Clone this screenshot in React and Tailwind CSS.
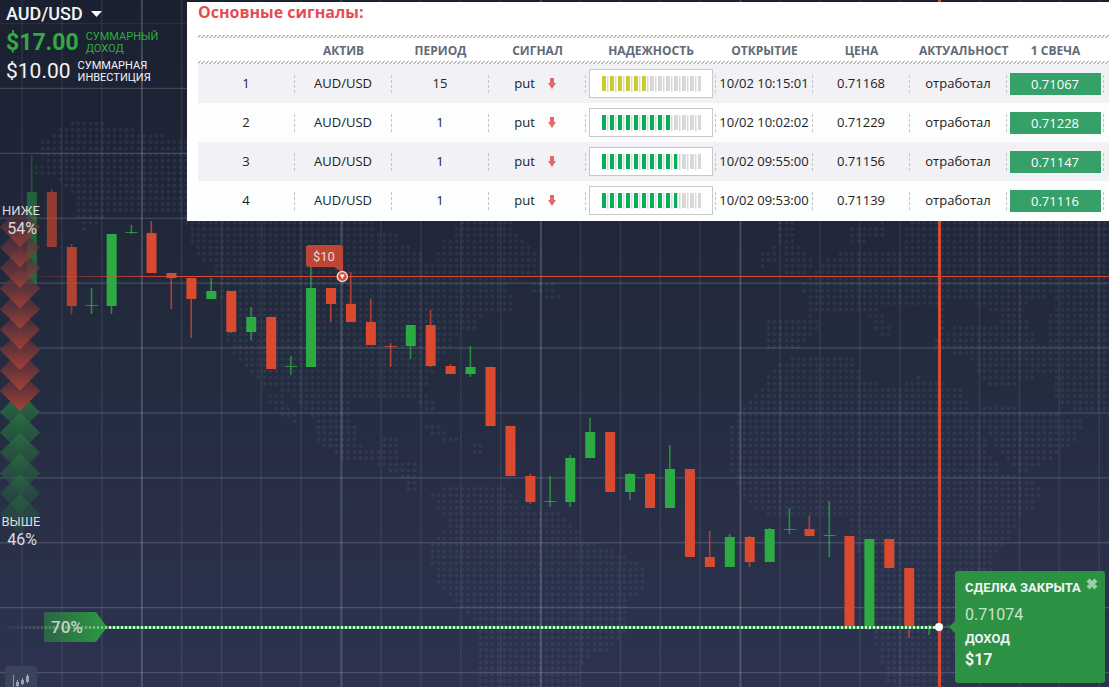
import { useMemo } from "react";

const signals = [
  { id: 1, asset: "AUD/USD", period: 15, signal: "put", power: 46, color: "#cdca2c", opened: "10/02 10:15:01", price: "0.71168", status: "отработал", candle: "0.71067" },
  { id: 2, asset: "AUD/USD", period: 1, signal: "put", power: 69, color: "#04b057", opened: "10/02 10:02:02", price: "0.71229", status: "отработал", candle: "0.71228" },
  { id: 3, asset: "AUD/USD", period: 1, signal: "put", power: 75, color: "#04b057", opened: "10/02 09:55:00", price: "0.71156", status: "отработал", candle: "0.71147" },
  { id: 4, asset: "AUD/USD", period: 1, signal: "put", power: 75, color: "#04b057", opened: "10/02 09:53:00", price: "0.71139", status: "отработал", candle: "0.71116" },
];

// [direction, body top, body bottom, wick top, wick bottom]
const candles = [
  ["up", 192, 284, 155, 284],
  ["down", 192, 247, 189, 247],
  ["down", 247, 306, 244, 314],
  ["up", 305, 306, 288, 314],
  ["up", 234, 306, 234, 314],
  ["up", 232, 233, 225, 234],
  ["down", 233, 273, 221, 273],
  ["down", 273, 278, 273, 309],
  ["down", 278, 299, 278, 338],
  ["up", 291, 299, 278, 299],
  ["down", 291, 332, 291, 333],
  ["up", 317, 332, 307, 340],
  ["down", 317, 369, 317, 369],
  ["up", 366, 367, 356, 375],
  ["up", 288, 367, 267, 367],
  ["down", 288, 304, 288, 322],
  ["down", 304, 322, 272, 322],
  ["down", 322, 345, 299, 345],
  ["down", 346, 347, 343, 367],
  ["up", 325, 346, 325, 359],
  ["down", 325, 366, 310, 367],
  ["down", 366, 374, 364, 374],
  ["up", 367, 374, 346, 377],
  ["down", 367, 426, 367, 426],
  ["down", 426, 476, 426, 476],
  ["down", 476, 502, 474, 504],
  ["up", 501, 502, 476, 507],
  ["up", 458, 502, 455, 507],
  ["up", 432, 458, 418, 458],
  ["down", 432, 492, 432, 492],
  ["up", 474, 492, 473, 500],
  ["down", 474, 508, 473, 508],
  ["up", 469, 508, 445, 508],
  ["down", 469, 557, 469, 557],
  ["down", 557, 567, 531, 567],
  ["up", 537, 567, 534, 567],
  ["down", 537, 562, 536, 567],
  ["up", 529, 562, 528, 562],
  ["up", 529, 530, 508, 534],
  ["down", 529, 536, 516, 536],
  ["up", 535, 536, 501, 557],
  ["down", 536, 627, 536, 627],
  ["up", 539, 627, 539, 630],
  ["down", 539, 568, 539, 568],
  ["down", 568, 627, 568, 638],
  ["up", 626, 627, 625, 635],
];

const land = [
  // North America
  [[76, 120], [88, 120], [118, 127], [155, 134], [187, 140], [372, 150], [374, 235], [398, 235], [400, 244], [420, 250], [426, 262], [434, 262], [440, 245], [455, 232], [458, 222], [514, 222], [520, 240], [530, 245], [540, 255], [540, 275], [506, 280], [510, 300], [498, 312], [476, 318], [476, 330], [458, 334], [450, 350], [436, 362], [432, 376], [424, 390], [434, 398], [434, 415], [424, 412], [418, 396], [360, 398], [352, 404], [354, 420], [356, 444], [374, 448], [384, 450], [384, 438], [398, 436], [398, 458], [416, 462], [418, 492], [408, 492], [400, 475], [380, 468], [376, 460], [345, 460], [332, 452], [316, 440], [312, 412], [296, 402], [280, 388], [262, 384], [240, 362], [225, 342], [222, 294], [214, 264], [200, 258], [190, 240], [184, 216], [110, 210], [98, 226], [80, 232], [76, 200], [60, 185], [56, 176], [34, 174], [34, 166], [48, 162], [34, 144], [50, 136]],
  [[262, 392], [282, 392], [300, 424], [292, 424], [270, 404]],
  [[528, 282], [552, 282], [562, 300], [552, 300], [530, 292]],
  [[496, 284], [502, 310], [512, 310], [512, 296]],
  [[418, 424], [436, 424], [462, 442], [448, 442], [430, 432]],
  [[470, 442], [484, 442], [480, 455], [470, 455]],
  // South America
  [[428, 492], [455, 485], [502, 485], [515, 500], [535, 510], [562, 512], [575, 530], [585, 542], [610, 548], [628, 556], [640, 564], [646, 575], [642, 592], [630, 600], [628, 620], [622, 640], [608, 650], [590, 656], [582, 668], [580, 690], [476, 690], [480, 640], [476, 622], [462, 612], [450, 596], [436, 580], [430, 562], [430, 545], [440, 534], [448, 522]],
  // Africa
  [[732, 425], [740, 412], [762, 388], [768, 375], [780, 360], [812, 356], [857, 356], [859, 376], [880, 384], [900, 388], [915, 376], [960, 388], [968, 400], [980, 424], [990, 455], [1002, 472], [1042, 485], [1038, 502], [1020, 520], [1008, 540], [995, 555], [994, 576], [980, 590], [970, 620], [952, 655], [944, 690], [890, 690], [878, 650], [873, 640], [868, 600], [874, 570], [852, 548], [850, 515], [765, 515], [745, 500], [732, 475]],
  // Europe and Asia
  [[804, 285], [815, 270], [828, 258], [840, 252], [902, 248], [908, 221], [1112, 221], [1112, 415], [1075, 412], [1050, 394], [1056, 372], [1010, 385], [985, 384], [970, 356], [932, 350], [936, 338], [940, 305], [895, 306], [880, 304], [890, 330], [886, 344], [864, 312], [806, 316]],
  [[984, 404], [1084, 418], [1076, 440], [1050, 462], [1022, 472], [1004, 456], [984, 430]],
  [[766, 318], [822, 318], [818, 332], [798, 348], [766, 348]],
  [[786, 243], [800, 243], [812, 262], [808, 274], [786, 274]],
  [[762, 250], [778, 245], [778, 262], [762, 268]],
  [[780, 222], [796, 222], [794, 244], [780, 244]],
  [[846, 232], [858, 226], [886, 222], [884, 240], [850, 243]],
];

const seas = [
  [[946, 302], [970, 300], [996, 312], [1004, 326], [960, 326], [946, 330]],
  [[1022, 306], [1050, 296], [1058, 300], [1048, 320], [1050, 342], [1036, 344], [1030, 326]],
];

function inside(x, y, shape) {
  let hit = false;
  for (let i = 0, j = shape.length - 1; i < shape.length; j = i++) {
    const [xi, yi] = shape[i];
    const [xj, yj] = shape[j];
    if (yi > y !== yj > y && x < ((xj - xi) * (y - yi)) / (yj - yi) + xi) hit = !hit;
  }
  return hit;
}

function WorldMap() {
  const d = useMemo(() => {
    let path = "";
    for (let y = 123.6; y < 690; y += 6.193) {
      for (let x = 24.4; x < 1112; x += 6) {
        if (!land.some((s) => inside(x, y, s)) || seas.some((s) => inside(x, y, s))) continue;
        path += `M${x.toFixed(1)} ${y.toFixed(1)}h0`;
      }
    }
    return path;
  }, []);
  return <path d={d} stroke="#8fa0b8" strokeOpacity="0.1" strokeWidth="4" strokeLinecap="round" />;
}

function Grid() {
  return (
    <g fill="#c8d0e0">
      {Array.from({ length: 28 }, (_, i) => {
        const major = (i + 2) % 5 === 0;
        return <rect key={i} x={21.2 + i * 39.9} y="0" width={major ? 2 : 1.5} height="100%" opacity={major ? 0.22 : 0.1} />;
      })}
      {Array.from({ length: 11 }, (_, i) => (
        <rect key={i} x="0" y={22.9 + i * 64.9} width="100%" height="1.3" opacity={i === 0 ? 0.08 : 0.2} />
      ))}
    </g>
  );
}

function Candle({ index, data }) {
  const [dir, top, bottom, high, low] = data;
  const x = 31.9 + index * 19.94;
  const flat = bottom - top < 2;
  const opacity = [0.45, 0.62, 0.78][index] || 1;
  const half = flat ? 6 : 5;
  return (
    <g fill={dir === "up" ? "#2cab42" : "#db492f"} opacity={opacity}>
      <rect x={x - 1} y={high} width="1.6" height={low - high} opacity="0.75" />
      <rect x={x - half} y={top} width={half * 2} height={bottom - top} opacity={flat ? 0.8 : 1} />
    </g>
  );
}

function Sentiment() {
  const red = Array.from({ length: 9 }, (_, i) => i).reverse();
  const green = Array.from({ length: 6 }, (_, i) => i);
  return (
    <g>
      {green.map((i) => (
        <path key={i} d={`M20 ${392 + i * 20.4}l20 20-20 20-20-20z`} fill="url(#bull)" opacity={1 - i * 0.1} />
      ))}
      {red.map((i) => (
        <path key={i} d={`M20 ${207 + i * 20.5}l20 20-20 20-20-20z`} fill="url(#bear)" opacity={0.65 + i * 0.043} />
      ))}
    </g>
  );
}

function Chart() {
  return (
    <svg className="absolute inset-0 h-full w-full" aria-hidden="true">
      <defs>
        <linearGradient id="bear" x1="0" y1="0" x2="0" y2="1">
          <stop offset="0.3" stopColor="#553039" />
          <stop offset="1" stopColor="#aa4237" />
        </linearGradient>
        <linearGradient id="bull" x1="0" y1="0" x2="0" y2="1">
          <stop offset="0" stopColor="#29713e" />
          <stop offset="0.9" stopColor="#264a42" />
        </linearGradient>
        <linearGradient id="tag" x1="0" y1="0" x2="1" y2="0">
          <stop offset="0" stopColor="#2c6547" />
          <stop offset="1" stopColor="#2c9a41" />
        </linearGradient>
        <linearGradient id="level" gradientUnits="userSpaceOnUse" x1="30" y1="0" x2="180" y2="0">
          <stop offset="0" stopColor="#db492f" stopOpacity="0.1" />
          <stop offset="1" stopColor="#db492f" />
        </linearGradient>
        <linearGradient id="fade" gradientUnits="userSpaceOnUse" x1="0" y1="0" x2="110" y2="0">
          <stop offset="0" stopColor="#fff" stopOpacity="0" />
          <stop offset="0.95" stopColor="#fff" stopOpacity="0.5" />
          <stop offset="1" stopColor="#fff" />
        </linearGradient>
        <mask id="left-fade" maskUnits="userSpaceOnUse" x="0" y="620" width="940" height="14">
          <rect x="0" y="620" width="940" height="14" fill="url(#fade)" />
        </mask>
        <pattern id="dots" patternUnits="userSpaceOnUse" x="0" y="626" width="4" height="3">
          <rect width="4" height="3" fill="#2b9f42" />
          <rect x="1" width="2" height="3" rx="1" fill="#fff" />
        </pattern>
      </defs>

      <WorldMap />
      <Grid />
      {candles.map((c, i) => (
        <Candle key={i} index={i} data={c} />
      ))}

      {/* price levels */}
      <rect x="30" y="276" width="100%" height="1" fill="url(#level)" />
      <rect x="938" y="0" width="3" height="100%" fill="#d24c38" />
      <path d="M44 612h52l11 15-11 15H44z" fill="url(#tag)" />
      <rect x="0" y="626" width="940" height="3" fill="url(#dots)" mask="url(#left-fade)" />
      <path d="M940 627h15" stroke="#2b9f42" />
      <circle cx="939" cy="627" r="4" fill="#fff" />

      <Sentiment />

      {/* opened deal marker */}
      <path d="M309 245h31a3 3 0 0 1 3 3v25l-9-6h-25a3 3 0 0 1-3-3v-16a3 3 0 0 1 3-3z" fill="#bd4637" />
      <circle cx="342.3" cy="276.5" r="5" fill="#db492f" stroke="#f0d3ce" strokeWidth="1.5" />
      <path d="M339.8 274.5h5l-2.5 4.5z" fill="#fff" />
    </svg>
  );
}

function PowerBar({ value, color }) {
  return (
    <div className="flex h-[29px] w-[124px] shrink-0 items-center border border-[#c8c8c8] bg-white pl-3">
      <svg width="99" height="16" role="img" aria-label={`${value}%`}>
        {Array.from({ length: 13 }, (_, i) => {
          const x = i * 8;
          const on = Math.max(0, Math.min(4, value - x));
          return (
            <g key={i}>
              <rect x={x} width="4" height="15" fill="#d8d8d8" />
              {on > 0 && <rect x={x} width={on} height="15" fill={color} />}
              <rect x={x + 5} width="1" height="16" fill="#d8d8d8" />
              <rect x={x + 6} width="1" height="16" fill="#eee" />
            </g>
          );
        })}
      </svg>
    </div>
  );
}

function Cell({ children }) {
  return (
    <td className="p-0">
      <div className="flex h-[18px] items-center justify-center border-r border-dashed border-[#c4c4c8] whitespace-nowrap">
        {children}
      </div>
    </td>
  );
}

function SignalsTable() {
  return (
    <section className="mt-[2px] min-w-0 flex-1 overflow-hidden bg-white pb-px pl-[11px] font-['Open_Sans',sans-serif]">
      <h2 className="h-[33px] text-base leading-[21px] font-bold text-[#e64c4f]">Основные сигналы:</h2>
      <table className="w-full table-fixed border-collapse text-[13px] text-[#222]">
        <colgroup>
          <col className="w-[97px]" />
          <col className="w-[97px]" />
          <col className="w-[97px]" />
          <col className="w-[97px]" />
          <col className="w-[130px]" />
          <col className="w-[97px]" />
          <col className="w-[97px]" />
          <col className="w-[97px]" />
          <col className="w-[97px]" />
          <col />
        </colgroup>
        <thead className="bg-[linear-gradient(135deg,transparent_25%,#bbb_25%_50%,transparent_50%_75%,#bbb_75%),linear-gradient(135deg,transparent_25%,#bbb_25%_50%,transparent_50%_75%,#bbb_75%)] [background-position:0_0,0_100%] bg-repeat-x [background-size:4px_3px]">
          <tr className="h-[29px] text-xs text-[#626a78]">
            <th className="p-0 pt-[2px]" />
            <th className="p-0 pt-[2px]">АКТИВ</th>
            <th className="p-0 pt-[2px]">ПЕРИОД</th>
            <th className="p-0 pt-[2px]">СИГНАЛ</th>
            <th className="p-0 pt-[2px]">НАДЕЖНОСТЬ</th>
            <th className="p-0 pt-[2px]">ОТКРЫТИЕ</th>
            <th className="p-0 pt-[2px]">ЦЕНА</th>
            <th className="p-0 pt-[2px] pl-[9px] text-left whitespace-nowrap">АКТУАЛЬНОСТ</th>
            <th className="p-0 pt-[2px]">1 СВЕЧА</th>
            <th className="p-0 pt-[2px]" />
          </tr>
        </thead>
        <tbody>
          {signals.map((row) => (
            <tr key={row.id} className="h-[39px] odd:bg-[#f1f1f6] even:bg-[#fcfefd]">
              <Cell>{row.id}</Cell>
              <Cell>{row.asset}</Cell>
              <Cell>{row.period}</Cell>
              <Cell>
                <span className="mr-[13px]">{row.signal}</span>
                <svg className="mr-1" width="8" height="11" aria-hidden="true">
                  <path d="M2 0h4v5h2L4 11 0 5h2z" fill="#e5686a" />
                </svg>
              </Cell>
              <Cell>
                <PowerBar value={row.power} color={row.color} />
              </Cell>
              <Cell>{row.opened}</Cell>
              <Cell>{row.price}</Cell>
              <Cell>{row.status}</Cell>
              <Cell>
                <span className="h-[22px] w-[91px] shrink-0 bg-[#35a067] text-center leading-[22px] font-medium text-white">
                  {row.candle}
                </span>
              </Cell>
              <td className="p-0" />
            </tr>
          ))}
        </tbody>
      </table>
    </section>
  );
}

function Summary() {
  return (
    <div className="w-[187px] shrink-0 pt-[3px] pl-[6px]">
      <button type="button" className="flex h-[22px] items-center gap-2 text-lg leading-[22px] font-medium">
        AUD/USD
        <svg width="11" height="6" aria-hidden="true">
          <path d="M0 0h11L5.5 6z" fill="#fff" />
        </svg>
      </button>
      <div className="mt-1 flex h-[28px] items-center gap-[7px] text-[#2dac42]">
        <span className="text-[23px] font-bold">$17.00</span>
        <span className="text-[11px] leading-[12px]">
          СУММАРНЫЙ
          <br />
          ДОХОД
        </span>
      </div>
      <div className="mt-px flex h-[28px] items-center gap-[7px]">
        <span className="text-[21px]">$10.00</span>
        <span className="text-[11px] leading-[12px]">
          СУММАРНАЯ
          <br />
          ИНВЕСТИЦИЯ
        </span>
      </div>
    </div>
  );
}

function DealClosed() {
  return (
    <div className="absolute top-[571px] left-[955px] h-[112px] w-[150px] rounded-[3px] bg-[#2c9741]/95 px-[10px] pt-2">
      <svg className="absolute top-[50px] -left-[6px]" width="6" height="12" aria-hidden="true">
        <path d="M6 0v12L0 6z" fill="#2c9741" />
      </svg>
      <button type="button" aria-label="Закрыть" className="absolute top-[7px] right-[7px]">
        <svg width="12" height="12" aria-hidden="true">
          <path d="M2 2l8 8M10 2l-8 8" stroke="#9dcfa5" strokeWidth="4" />
        </svg>
      </button>
      <p className="text-[13px] leading-[18px] font-bold whitespace-nowrap">СДЕЛКА ЗАКРЫТА</p>
      <p className="mt-2 text-base leading-5 text-[#c9e5cd]">0.71074</p>
      <p className="mt-1 text-[13px] leading-5 font-bold">ДОХОД</p>
      <p className="mt-px text-base leading-5 font-bold">$17</p>
    </div>
  );
}

export default function App() {
  return (
    <main className="relative h-screen overflow-hidden bg-linear-to-b from-[#1b2030] via-[#232b3e] to-[#2d334f] font-['Roboto',sans-serif] text-[#f2f3f5]">
      <Chart />

      <header className="relative flex items-start">
        <Summary />
        <SignalsTable />
      </header>

      <div className="absolute top-[202px] left-0 w-[42px] text-center text-[#dcdcdf]">
        <p className="text-[13px] leading-[18px]">НИЖЕ</p>
        <p className="pl-[2px] text-base leading-[18px]">54%</p>
      </div>
      <div className="absolute top-[513px] left-0 w-[42px] text-center text-[#dcdcdf]">
        <p className="text-[13px] leading-[18px]">ВЫШЕ</p>
        <p className="pl-[2px] text-base leading-[18px]">46%</p>
      </div>

      <span className="absolute top-[617px] left-[51px] text-[17px] leading-5 font-medium text-[#c8d0cc]">70%</span>
      <span className="absolute top-[248px] left-[313px] text-[13px] leading-[18px] text-[#f0d8d4]">$10</span>

      <DealClosed />

      <button
        type="button"
        aria-label="Тип графика"
        className="absolute top-[666px] left-[5px] h-8 w-8 rounded-[3px] bg-[#3a435a]"
      >
        <svg width="32" height="32" aria-hidden="true">
          <path d="M8.5 9v14M7 22h18" stroke="#8d95a5" />
          <path d="M12.5 14v7M17.5 12v7M22.5 8v9" stroke="#9ba3b1" />
          <path d="M12.5 16v4M17.5 14v4M22.5 10v6" stroke="#9ba3b1" strokeWidth="3" />
        </svg>
      </button>
    </main>
  );
}
